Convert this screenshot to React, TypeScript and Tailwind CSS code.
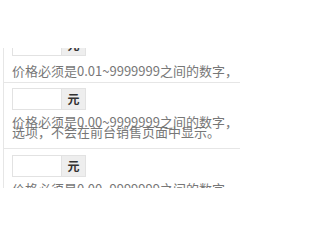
const font = { fontFamily: '"Noto Sans CJK SC", "Microsoft YaHei", sans-serif' };

function PriceInput() {
  return (
    <div className="flex h-[22px] w-[74px]">
      <input
        type="text"
        className="h-full w-[50px] border border-[#e2e2e2] bg-white px-1 text-[12px] outline-none"
      />
      <span className="flex h-full w-[24px] items-center justify-center border border-l-0 border-[#e2e2e2] bg-[#eeeeee] text-[12px] font-bold text-[#333]">
        元
      </span>
    </div>
  );
}

export default function App() {
  return (
    <div className="h-[240px] w-[240px] overflow-hidden bg-white" style={font}>
      <div className="pt-[48px]">
        <div className="ml-[3px] h-[140px] overflow-hidden border-l border-[#e6e6e6]">
          <div className="-mt-[19px]">
            {/* row 1, cut off at the top */}
            <div className="border-b border-[#e6e6e6] pb-[6px] pl-[8px] pt-[5px]">
              <PriceInput />
              <p className="mt-[9px] whitespace-nowrap text-[13px] leading-[11px] text-[#777]">
                价格必须是0.01~9999999之间的数字，
              </p>
            </div>

            {/* row 2 */}
            <div className="border-b border-[#e6e6e6] pb-[11px] pl-[8px] pt-[5px]">
              <PriceInput />
              <div className="mt-[7px] whitespace-nowrap text-[13px] leading-[10px] text-[#777]">
                <p>价格必须是0.00~9999999之间的数字，</p>
                <p>选项，不会在前台销售页面中显示。</p>
              </div>
            </div>

            {/* row 3, cut off at the bottom */}
            <div className="pl-[8px] pt-[6px]">
              <PriceInput />
              <p className="mt-[7px] whitespace-nowrap text-[13px] leading-[10px] text-[#777]">
                价格必须是0.00~9999999之间的数字，
              </p>
            </div>
          </div>
        </div>
      </div>
    </div>
  );
}
